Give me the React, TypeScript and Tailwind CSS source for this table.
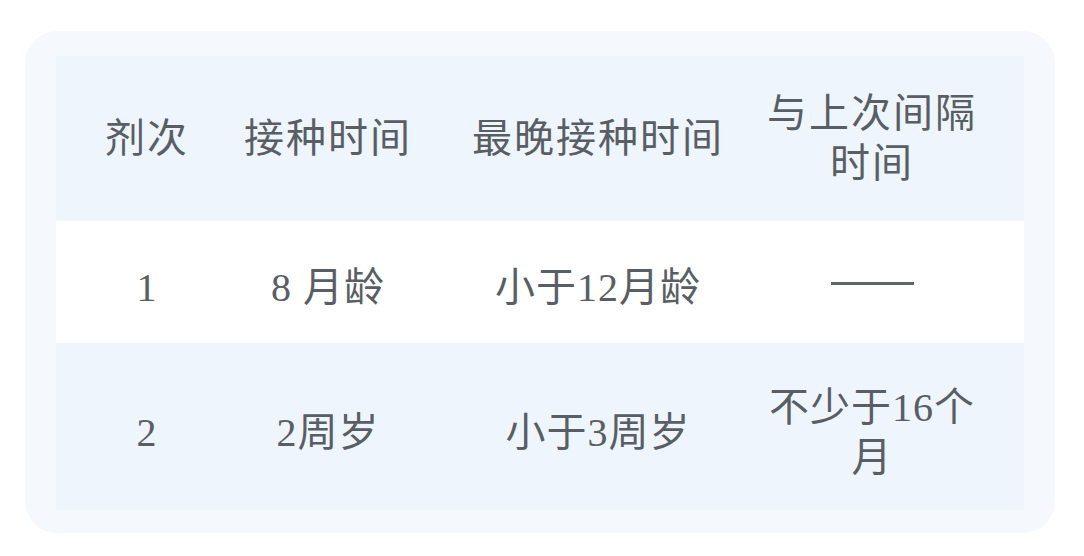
const HEAD = ["剂次", "接种时间", "最晚接种时间", "与上次间隔时间"];

const ROWS = [
  { cells: ["1", "8 月龄", "小于12月龄", "-"], bg: "bg-white", h: "h-[122px]" },
  { cells: ["2", "2周岁", "小于3周岁", "不少于16个月"], bg: "bg-[#eef5fd]", h: "h-[167px]" },
];

const COLS = "grid grid-cols-[182px_180px_346px_216px_1fr]";

function Cell({ text, idx, head }: { text: string; idx: number; head?: boolean }) {
  return (
    <div
      className={`flex items-center justify-center text-center leading-[50px] ${
        head ? "tracking-[2px]" : "tracking-[1px] pt-[12px]"
      } ${idx === 2 ? "pl-[14px]" : ""}`}
    >
      {text === "-" ? <span className="block w-[83px] h-[3px] -mt-[10px] bg-[#5f646b]" /> : text}
    </div>
  );
}

export default function App() {
  return (
    <div className="w-[1084px] h-[556px] bg-white pt-[31px] pl-[25px]">
      <div
        className="w-[1030px] h-[502px] rounded-[32px] bg-[#f5f9fe] px-[31px] pt-[25px] text-[40px] text-[#595e65]"
        style={{ fontFamily: '"Liberation Serif", "Noto Sans CJK SC", serif' }}
      >
        <div className="bg-[#eef5fd]">
          <div className={`${COLS} h-[165px]`}>
            {HEAD.map((t, i) => (
              <Cell key={i} text={t} idx={i} head />
            ))}
            <div />
          </div>
          {ROWS.map((r, ri) => (
            <div key={ri} className={`${COLS} ${r.h} ${r.bg}`}>
              {r.cells.map((t, i) => (
                <Cell key={i} text={t} idx={i} />
              ))}
              <div />
            </div>
          ))}
        </div>
      </div>
    </div>
  );
}
